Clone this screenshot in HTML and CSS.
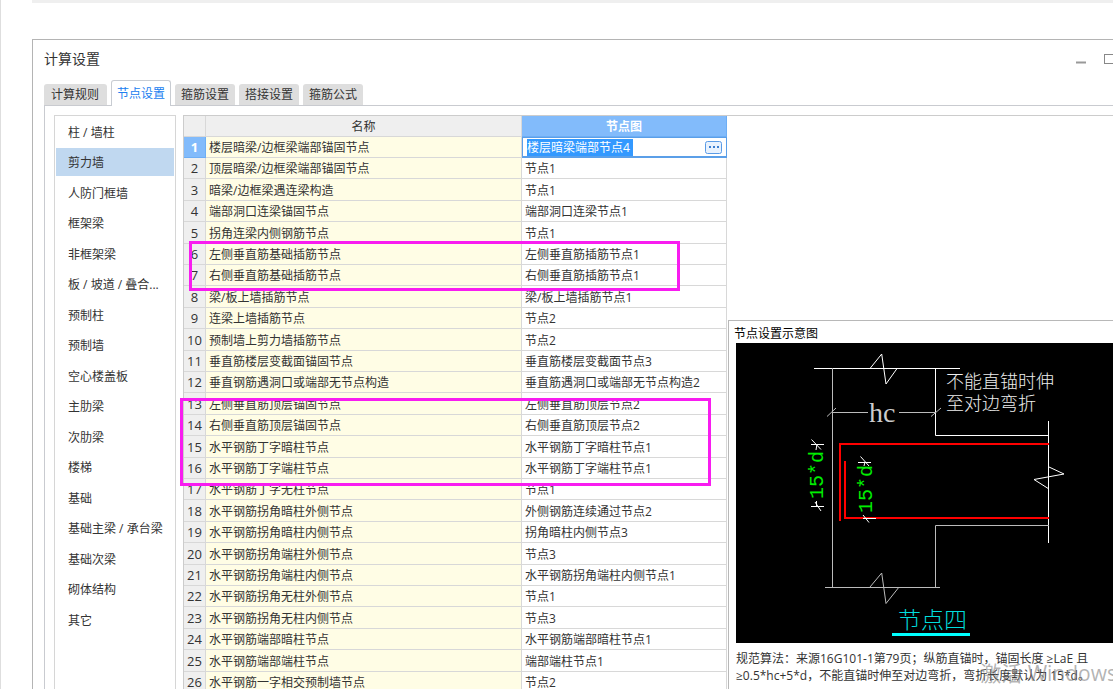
FILE: index.html
```html
<!DOCTYPE html>
<html lang="zh-CN">
<head>
<meta charset="utf-8">
<title>计算设置</title>
<link rel="stylesheet" href="styles.css">
</head>
<body>
<div class="page">
  <div class="strip"></div>
  <main class="window">
    <header class="titlebar">
      <h1 class="title">计算设置</h1>
      <div class="controls">
        <button class="control" type="button" aria-label="最小化"><svg width="12" height="12"><path d="M1 9.5h10" stroke="#999" stroke-width="2"/></svg></button>
        <button class="control" type="button" aria-label="最大化"><svg width="12" height="12"><rect x="0.5" y="1.5" width="11" height="9" fill="none" stroke="#888"/></svg></button>
      </div>
    </header>
    <div class="tabs" role="tablist">
      <button class="tab" type="button" role="tab">计算规则</button>
      <button class="tab active" type="button" role="tab" aria-selected="true">节点设置</button>
      <button class="tab" type="button" role="tab">箍筋设置</button>
      <button class="tab" type="button" role="tab">搭接设置</button>
      <button class="tab" type="button" role="tab">箍筋公式</button>
    </div>
    <div class="panel">
      <nav class="list">
        <button class="item" type="button">柱 / 墙柱</button>
        <button class="item current" type="button">剪力墙</button>
        <button class="item" type="button">人防门框墙</button>
        <button class="item" type="button">框架梁</button>
        <button class="item" type="button">非框架梁</button>
        <button class="item" type="button">板 / 坡道 / 叠合...</button>
        <button class="item" type="button">预制柱</button>
        <button class="item" type="button">预制墙</button>
        <button class="item" type="button">空心楼盖板</button>
        <button class="item" type="button">主肋梁</button>
        <button class="item" type="button">次肋梁</button>
        <button class="item" type="button">楼梯</button>
        <button class="item" type="button">基础</button>
        <button class="item" type="button">基础主梁 / 承台梁</button>
        <button class="item" type="button">基础次梁</button>
        <button class="item" type="button">砌体结构</button>
        <button class="item" type="button">其它</button>
      </nav>
      <div class="workspace">
        <div class="grid">
          <table class="nodes">
            <colgroup><col class="col-num"><col class="col-name"><col class="col-node"></colgroup>
            <thead><tr><th></th><th>名称</th><th class="picked">节点图</th></tr></thead>
            <tbody>
              <tr><th class="picked">1</th><td>楼层暗梁/边框梁端部锚固节点</td><td class="editing"><div class="editor"><input class="field" type="text" value="楼层暗梁端部节点4" aria-label="节点图"><button class="more" type="button" aria-label="更多"><svg width="17" height="13"><rect x="0.5" y="0.5" width="16" height="12" rx="2" fill="#e8f2fe" stroke="#5a9be6"/><path d="M4 6h2M8 6h2M12 6h2" stroke="#3d7fd0" stroke-width="2"/></svg></button></div></td></tr>
              <tr><th>2</th><td>顶层暗梁/边框梁端部锚固节点</td><td>节点1</td></tr>
              <tr><th>3</th><td>暗梁/边框梁遇连梁构造</td><td>节点1</td></tr>
              <tr><th>4</th><td>端部洞口连梁锚固节点</td><td>端部洞口连梁节点1</td></tr>
              <tr><th>5</th><td>拐角连梁内侧钢筋节点</td><td>节点1</td></tr>
              <tr><th>6</th><td>左侧垂直筋基础插筋节点</td><td>左侧垂直筋插筋节点1</td></tr>
              <tr><th>7</th><td>右侧垂直筋基础插筋节点</td><td>右侧垂直筋插筋节点1</td></tr>
              <tr><th>8</th><td>梁/板上墙插筋节点</td><td>梁/板上墙插筋节点1</td></tr>
              <tr><th>9</th><td>连梁上墙插筋节点</td><td>节点2</td></tr>
              <tr><th>10</th><td>预制墙上剪力墙插筋节点</td><td>节点2</td></tr>
              <tr><th>11</th><td>垂直筋楼层变截面锚固节点</td><td>垂直筋楼层变截面节点3</td></tr>
              <tr><th>12</th><td>垂直钢筋遇洞口或端部无节点构造</td><td>垂直筋遇洞口或端部无节点构造2</td></tr>
              <tr><th>13</th><td>左侧垂直筋顶层锚固节点</td><td>左侧垂直筋顶层节点2</td></tr>
              <tr><th>14</th><td>右侧垂直筋顶层锚固节点</td><td>右侧垂直筋顶层节点2</td></tr>
              <tr><th>15</th><td>水平钢筋丁字暗柱节点</td><td>水平钢筋丁字暗柱节点1</td></tr>
              <tr><th>16</th><td>水平钢筋丁字端柱节点</td><td>水平钢筋丁字端柱节点1</td></tr>
              <tr><th>17</th><td>水平钢筋丁字无柱节点</td><td>节点1</td></tr>
              <tr><th>18</th><td>水平钢筋拐角暗柱外侧节点</td><td>外侧钢筋连续通过节点2</td></tr>
              <tr><th>19</th><td>水平钢筋拐角暗柱内侧节点</td><td>拐角暗柱内侧节点3</td></tr>
              <tr><th>20</th><td>水平钢筋拐角端柱外侧节点</td><td>节点3</td></tr>
              <tr><th>21</th><td>水平钢筋拐角端柱内侧节点</td><td>水平钢筋拐角端柱内侧节点1</td></tr>
              <tr><th>22</th><td>水平钢筋拐角无柱外侧节点</td><td>节点1</td></tr>
              <tr><th>23</th><td>水平钢筋拐角无柱内侧节点</td><td>节点3</td></tr>
              <tr><th>24</th><td>水平钢筋端部暗柱节点</td><td>水平钢筋端部暗柱节点1</td></tr>
              <tr><th>25</th><td>水平钢筋端部端柱节点</td><td>端部端柱节点1</td></tr>
              <tr><th>26</th><td>水平钢筋一字相交预制墙节点</td><td>节点2</td></tr>
            </tbody>
          </table>
          <div class="mark mark-first"></div>
          <div class="mark mark-second"></div>
        </div>
        <section class="preview">
          <h2 class="caption">节点设置示意图</h2>
          <div class="canvas">
            <svg class="drawing" width="377" height="300" viewBox="0 0 377 300" fill="none">
              <g stroke="#fff">
                <path d="M78 25.5H224M199.500 25V92.500H313M312.500 78V200M134 25.500L145.700 11L150 41L160.700 26"/>
                <path d="M313 124L328 131L298 136.500L313 146"/>
              </g>
              <g stroke="#bbb">
                <path d="M96.500 25V244M96 69.500H132M163 69.500H200M91 73.500L100 65M195 73.500L205 65"/>
                <path d="M89 244.500H204M199.500 244V182.500H313M134 244L145.700 230L150 260.500L162.700 244.500"/>
              </g>
              <g stroke="#f00" stroke-width="2">
                <path d="M104 178V101H313"/>
                <path d="M109 118V175H313"/>
              </g>
              <g stroke="#fff">
                <path d="M75 101.500H88M75.500 96.500L85 106.500M81 101L80 107"/>
                <path d="M75 163.500H88M79 159L85 168M80.500 158V164"/>
                <path d="M122 119.500H135M124.500 113.500L133 123M129 119L128 123"/>
                <path d="M127 175.500H140M127 172L133 179.500"/>
              </g>
              <text class="dim" x="133" y="79">hc</text>
              <text class="note" x="210" y="45">不能直锚时伸</text>
              <text class="note" x="210" y="67">至对边弯折</text>
              <text class="bar" transform="translate(87 156) rotate(-90)">15*d</text>
              <text class="bar" transform="translate(136 170) rotate(-90)">15*d</text>
              <text class="name" x="162" y="285">节点四</text>
              <path d="M156 291.500H234" stroke="#0ff" stroke-width="3"/>
            </svg>
          </div>
          <p class="rule">规范算法：来源16G101-1第79页；纵筋直锚时，锚固长度 ≥LaE 且<br>≥0.5*hc+5*d，不能直锚时伸至对边弯折，弯折长度默认为 15*d。</p>
          <div class="watermark">激活 Windows</div>
        </section>
      </div>
    </div>
  </main>
</div>
</body>
</html>
```
FILE: styles.css
```css
* { box-sizing: border-box; }

body {
  margin: 0;
  background: #fff;
  color: #333;
  font: 12px/20px "Open Sans", "Noto Sans CJK SC", sans-serif;
}

button {
  margin: 0;
  padding: 0;
  border: 0;
  background: none;
  color: inherit;
  font: inherit;
}

.page {
  display: flex;
  flex-direction: column;
  height: 100vh;
  padding-left: 31px;
  border-left: 1px solid #dedede;
  overflow: hidden;
}

.strip {
  flex: none;
  height: 3px;
  margin-bottom: 36px;
  background: #efefef;
}

.window {
  flex: 1;
  display: flex;
  flex-direction: column;
  min-height: 0;
  padding-left: 11px;
  border: solid #b4b4b4;
  border-width: 1px 0 0 1px;
}

.titlebar {
  display: flex;
  justify-content: space-between;
  align-items: center;
  height: 40px;
  padding-bottom: 2px;
  overflow: hidden;
}

.title {
  margin: 0;
  font-size: 14px;
  font-weight: 400;
}

.controls {
  display: flex;
  gap: 17px;
  margin-right: -3px;
}

.control { display: flex; }

.tabs {
  position: relative;
  display: flex;
  align-items: flex-end;
  gap: 4px;
  height: 26px;
  margin-bottom: -1px;
}

.tab {
  height: 21px;
  margin-bottom: 1px;
  padding: 0 6px;
  border-radius: 3px 3px 0 0;
  background: #dedede;
}

.tab:first-child { padding: 0 8px 0 7px; }

.tab.active {
  height: 26px;
  margin-bottom: 0;
  padding: 0 5px;
  border: 1px solid #c8ccd2;
  border-bottom: 0;
  background: #fff;
  color: #2080f0;
}

.panel {
  flex: 1;
  display: flex;
  gap: 7px;
  min-height: 0;
  padding: 9px 0 0 9px;
  border: solid #c9cbd0;
  border-width: 1px 0 0 1px;
}

.list {
  flex: none;
  display: flex;
  flex-direction: column;
  width: 122px;
  padding: 2px 1px;
  border: 1px solid #d6d6d6;
  border-bottom: 0;
  overflow: hidden;
}

.item {
  flex: none;
  height: 28px;
  margin-bottom: 2px;
  padding: 2px 0 0 12px;
  text-align: left;
  white-space: nowrap;
}

.item:nth-child(even) { margin-bottom: 3px; }

.item.current { background: #c0d8f0; }

.workspace {
  flex: 1;
  display: flex;
  min-width: 0;
  border: solid #ccc;
  border-width: 1px 0 0 1px;
}

.grid {
  position: relative;
  flex: none;
  padding-right: 1px;
}

.nodes {
  width: 543px;
  table-layout: fixed;
  border-collapse: separate;
  border-spacing: 0;
}

.col-num { width: 22px; }
.col-name { width: 316px; }

.nodes th,
.nodes td {
  height: 21px;
  padding: 2px 0 0 3px;
  border: solid #d8d8d8;
  border-width: 0 1px 1px 0;
  line-height: 18px;
  font-weight: 400;
  text-align: left;
  white-space: nowrap;
}

.nodes th {
  padding-left: 0;
  background: #efefef;
  text-align: center;
}

.nodes tbody th {
  padding: 0;
  font-size: 13px;
  line-height: 20px;
}

.nodes tr:nth-child(5n + 3) td,
.nodes tr:nth-child(5n) td { height: 22px; }

.nodes td:nth-child(2) { background: #fffde5; }

.nodes th.picked {
  border-color: #6daef5;
  background: #82bbfb;
  color: #fff;
  font-weight: 700;
}

.nodes td.editing {
  padding: 0;
  border-color: #5b9fe8;
}

.editor {
  display: flex;
  align-items: center;
  justify-content: space-between;
  height: 20px;
  padding: 0 4px;
  border: solid #5b9fe8;
  border-width: 1px 0 1px 1px;
}

.field {
  width: 106px;
  height: 17px;
  padding: 1px 0 0;
  border: 0;
  background: #3399ff;
  color: #fff;
  font: inherit;
}

.more { display: flex; }

.mark {
  position: absolute;
  border: 3px solid #f81cf0;
}

.mark-first {
  top: 125px;
  left: 5px;
  width: 491px;
  height: 50px;
}

.mark-second {
  top: 282px;
  left: -4px;
  width: 531px;
  height: 88px;
}

.preview {
  position: relative;
  flex: 1;
  min-width: 0;
  margin-top: 204px;
  padding: 4px 0 0 7px;
  border: solid #b8b8b8;
  border-width: 1px 0 0 1px;
}

.caption {
  margin: 0 0 0 -2px;
  font-size: 12px;
  line-height: 18px;
  font-weight: 400;
  color: #000;
}

.canvas {
  height: 300px;
  background: #000;
  overflow: hidden;
}

.drawing { display: block; }

.drawing text { fill: #eee; }

.drawing .dim {
  fill: #ccc;
  font: 28px "Liberation Serif", serif;
}

.drawing .note { font: 300 18px "Noto Sans CJK SC", sans-serif; }

.drawing .bar {
  fill: #0e0;
  font: 20px "Liberation Mono", monospace;
}

.drawing .name {
  fill: #0dd;
  font: 300 23px "Noto Sans CJK SC", sans-serif;
}

.rule {
  margin: 7px 0 0;
  line-height: 17px;
  white-space: nowrap;
}

.watermark {
  position: absolute;
  right: -4px;
  bottom: 2px;
  color: rgba(130, 130, 130, 0.6);
  font-size: 21px;
  line-height: 28px;
  white-space: nowrap;
}
```
